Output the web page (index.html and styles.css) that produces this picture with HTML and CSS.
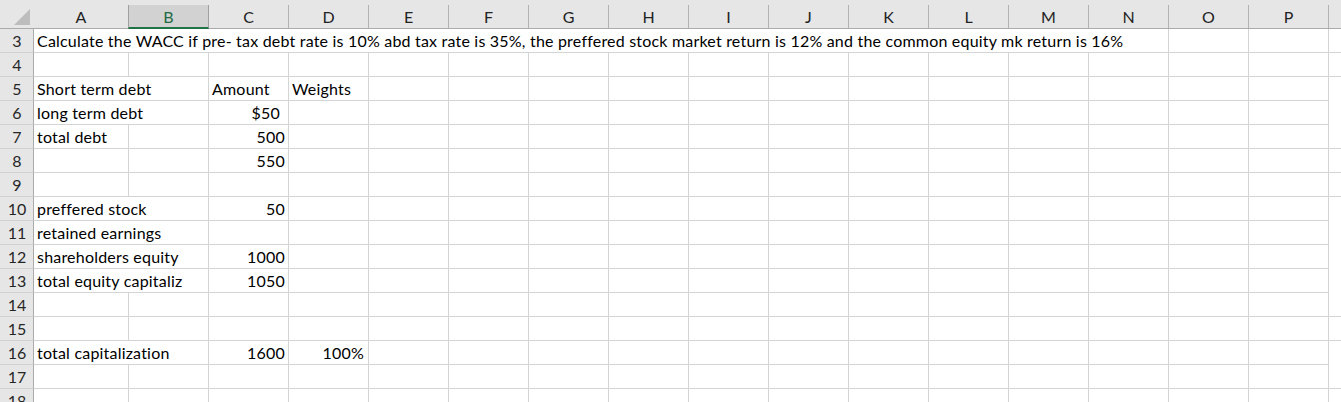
FILE: index.html
```html
<!DOCTYPE html>
<html>
<head>
<meta charset="utf-8">
<link rel="stylesheet" href="styles.css">
</head>
<body>
<div class="sheet">
  <div class="colhead">
    <div class="corner"><span class="tri"></span></div>
    <div class="ch">A</div>
    <div class="ch sel">B</div>
    <div class="ch">C</div>
    <div class="ch">D</div>
    <div class="ch">E</div>
    <div class="ch">F</div>
    <div class="ch">G</div>
    <div class="ch">H</div>
    <div class="ch">I</div>
    <div class="ch">J</div>
    <div class="ch">K</div>
    <div class="ch">L</div>
    <div class="ch">M</div>
    <div class="ch">N</div>
    <div class="ch">O</div>
    <div class="ch">P</div>
    <div class="ch"></div>
  </div>

  <div class="row"><div class="rh">3</div><div class="c span14">Calculate the WACC if pre- tax debt rate is 10% abd tax rate is 35%, the preffered stock market return is 12% and the common equity mk return is 16%</div><div class="c"></div><div class="c"></div><div class="c"></div></div>
  <div class="row"><div class="rh">4</div><div class="c"></div><div class="c"></div><div class="c"></div><div class="c"></div><div class="c"></div><div class="c"></div><div class="c"></div><div class="c"></div><div class="c"></div><div class="c"></div><div class="c"></div><div class="c"></div><div class="c"></div><div class="c"></div><div class="c"></div><div class="c"></div><div class="c"></div></div>
  <div class="row"><div class="rh">5</div><div class="c span2">Short term debt</div><div class="c">Amount</div><div class="c">Weights</div><div class="c"></div><div class="c"></div><div class="c"></div><div class="c"></div><div class="c"></div><div class="c"></div><div class="c"></div><div class="c"></div><div class="c"></div><div class="c"></div><div class="c"></div><div class="c"></div></div>
  <div class="row"><div class="rh">6</div><div class="c span2">long term debt</div><div class="c num cur">$50</div><div class="c"></div><div class="c"></div><div class="c"></div><div class="c"></div><div class="c"></div><div class="c"></div><div class="c"></div><div class="c"></div><div class="c"></div><div class="c"></div><div class="c"></div><div class="c"></div><div class="c"></div></div>
  <div class="row"><div class="rh">7</div><div class="c">total debt</div><div class="c"></div><div class="c num">500</div><div class="c"></div><div class="c"></div><div class="c"></div><div class="c"></div><div class="c"></div><div class="c"></div><div class="c"></div><div class="c"></div><div class="c"></div><div class="c"></div><div class="c"></div><div class="c"></div><div class="c"></div><div class="c"></div></div>
  <div class="row"><div class="rh">8</div><div class="c"></div><div class="c"></div><div class="c num">550</div><div class="c"></div><div class="c"></div><div class="c"></div><div class="c"></div><div class="c"></div><div class="c"></div><div class="c"></div><div class="c"></div><div class="c"></div><div class="c"></div><div class="c"></div><div class="c"></div><div class="c"></div><div class="c"></div></div>
  <div class="row"><div class="rh">9</div><div class="c"></div><div class="c"></div><div class="c"></div><div class="c"></div><div class="c"></div><div class="c"></div><div class="c"></div><div class="c"></div><div class="c"></div><div class="c"></div><div class="c"></div><div class="c"></div><div class="c"></div><div class="c"></div><div class="c"></div><div class="c"></div><div class="c"></div></div>
  <div class="row"><div class="rh">10</div><div class="c span2">preffered stock</div><div class="c num">50</div><div class="c"></div><div class="c"></div><div class="c"></div><div class="c"></div><div class="c"></div><div class="c"></div><div class="c"></div><div class="c"></div><div class="c"></div><div class="c"></div><div class="c"></div><div class="c"></div><div class="c"></div></div>
  <div class="row"><div class="rh">11</div><div class="c span2">retained earnings</div><div class="c"></div><div class="c"></div><div class="c"></div><div class="c"></div><div class="c"></div><div class="c"></div><div class="c"></div><div class="c"></div><div class="c"></div><div class="c"></div><div class="c"></div><div class="c"></div><div class="c"></div><div class="c"></div></div>
  <div class="row"><div class="rh">12</div><div class="c span2">shareholders equity</div><div class="c num">1000</div><div class="c"></div><div class="c"></div><div class="c"></div><div class="c"></div><div class="c"></div><div class="c"></div><div class="c"></div><div class="c"></div><div class="c"></div><div class="c"></div><div class="c"></div><div class="c"></div><div class="c"></div></div>
  <div class="row"><div class="rh">13</div><div class="c span2">total equity capitaliz</div><div class="c num">1050</div><div class="c"></div><div class="c"></div><div class="c"></div><div class="c"></div><div class="c"></div><div class="c"></div><div class="c"></div><div class="c"></div><div class="c"></div><div class="c"></div><div class="c"></div><div class="c"></div><div class="c"></div></div>
  <div class="row"><div class="rh">14</div><div class="c"></div><div class="c"></div><div class="c"></div><div class="c"></div><div class="c"></div><div class="c"></div><div class="c"></div><div class="c"></div><div class="c"></div><div class="c"></div><div class="c"></div><div class="c"></div><div class="c"></div><div class="c"></div><div class="c"></div><div class="c"></div><div class="c"></div></div>
  <div class="row"><div class="rh">15</div><div class="c"></div><div class="c"></div><div class="c"></div><div class="c"></div><div class="c"></div><div class="c"></div><div class="c"></div><div class="c"></div><div class="c"></div><div class="c"></div><div class="c"></div><div class="c"></div><div class="c"></div><div class="c"></div><div class="c"></div><div class="c"></div><div class="c"></div></div>
  <div class="row"><div class="rh">16</div><div class="c span2">total capitalization</div><div class="c num">1600</div><div class="c num pct">100%</div><div class="c"></div><div class="c"></div><div class="c"></div><div class="c"></div><div class="c"></div><div class="c"></div><div class="c"></div><div class="c"></div><div class="c"></div><div class="c"></div><div class="c"></div><div class="c"></div></div>
  <div class="row"><div class="rh">17</div><div class="c"></div><div class="c"></div><div class="c"></div><div class="c"></div><div class="c"></div><div class="c"></div><div class="c"></div><div class="c"></div><div class="c"></div><div class="c"></div><div class="c"></div><div class="c"></div><div class="c"></div><div class="c"></div><div class="c"></div><div class="c"></div><div class="c"></div></div>
  <div class="row"><div class="rh">18</div><div class="c"></div><div class="c"></div><div class="c"></div><div class="c"></div><div class="c"></div><div class="c"></div><div class="c"></div><div class="c"></div><div class="c"></div><div class="c"></div><div class="c"></div><div class="c"></div><div class="c"></div><div class="c"></div><div class="c"></div><div class="c"></div><div class="c"></div></div>
</div>
</body>
</html>
```

FILE: styles.css
```css
html, body {
  margin: 0;
  padding: 0;
  background: #ffffff;
  overflow: hidden;
}
.sheet {
  width: 1409px;
  font-family: Lato, "Open Sans", sans-serif;
  font-size: 16px;
  color: #000;
}
.colhead, .row {
  display: grid;
  grid-template-columns: 34px 95px repeat(16, 80px);
}
.colhead {
  height: 29px;
  background: #e6e6e6;
  border-bottom: 1px solid #ababab;
  box-sizing: border-box;
  padding-top: 5px;
}
.corner {
  position: relative;
  margin-top: -5px;
}
.tri {
  position: absolute;
  left: 14px;
  top: 9px;
  width: 0;
  height: 0;
  border-style: solid;
  border-width: 0 0 16px 16px;
  border-color: transparent transparent #bdbdbd transparent;
}
.ch {
  border-right: 1px solid #b3b3b3;
  display: flex;
  align-items: center;
  justify-content: center;
  color: #222;
  font-size: 16px;
  padding-bottom: 1px;
}
.ch.sel {
  background: #d2d2d2;
  color: #1e6b45;
  border-bottom: 2px solid #217346;
  padding-bottom: 0;
  margin-bottom: -1px;
  border-left: 1px solid #a0a0a0;
  margin-left: -1px;
  border-right-color: #a0a0a0;
}
.row {
  height: 24px;
}
.rh {
  background: #e6e6e6;
  border-right: 1px solid #ababab;
  border-bottom: 1px solid #d0d0d0;
  display: flex;
  align-items: center;
  justify-content: center;
  color: #262626;
  font-size: 16px;
  padding-left: 1px;
}
.c {
  border-right: 1px solid #d4d4d4;
  border-bottom: 1px solid #d4d4d4;
  padding: 0 3px;
  white-space: nowrap;
  overflow: hidden;
  display: flex;
  align-items: center;
  line-height: 23px;
  letter-spacing: 0.2px;
}
.span2 { grid-column: span 2; }
.span14 { grid-column: span 14; }
.num { justify-content: flex-end; }
.cur { padding-right: 8px; }
.pct { padding-right: 4px; }
```
